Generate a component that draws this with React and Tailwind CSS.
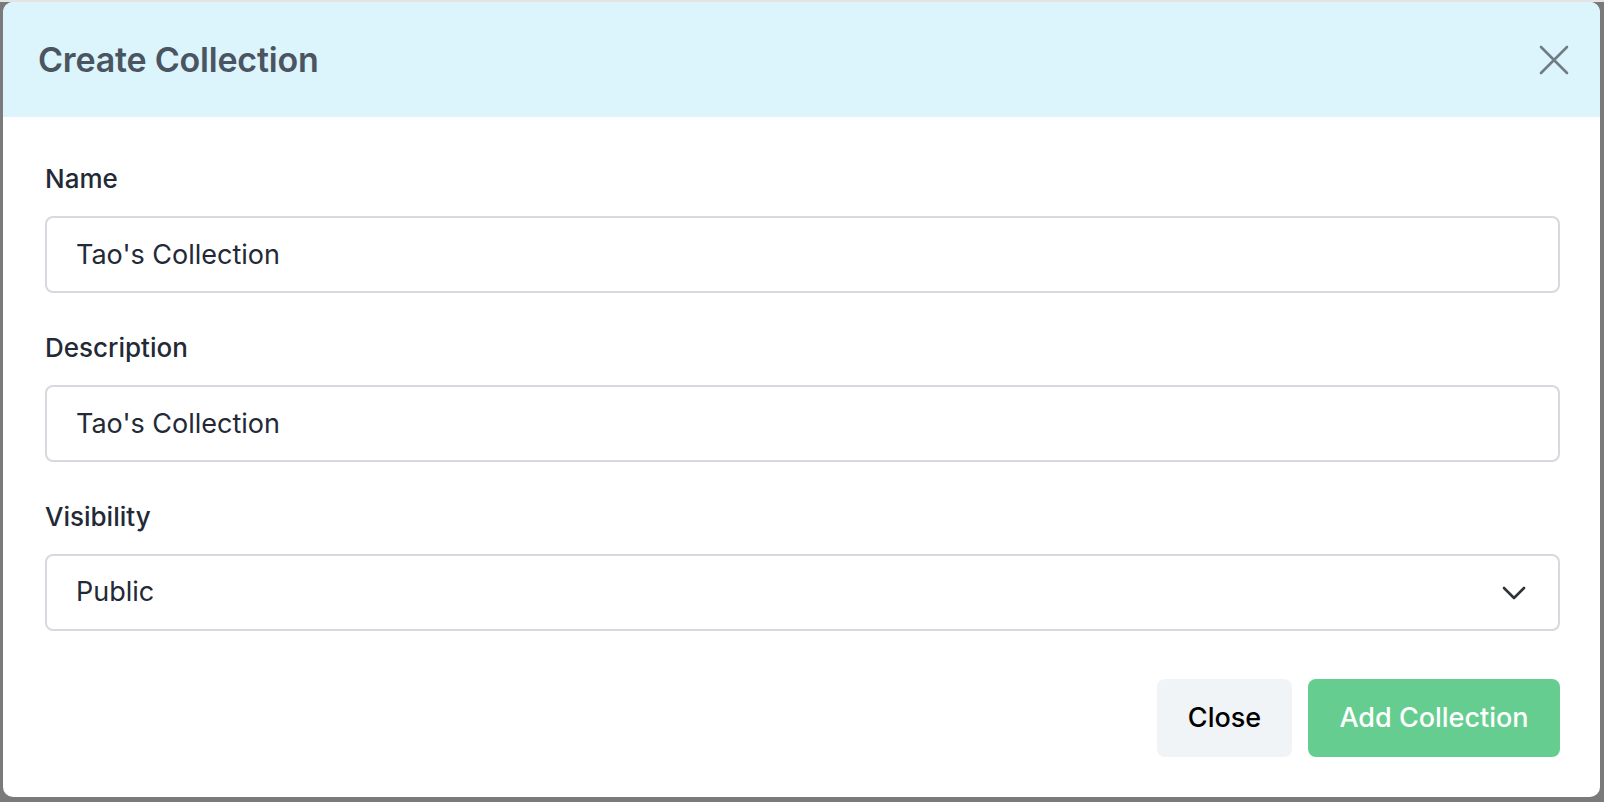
import React, { useState } from "react";

const fields = [
  { id: "name", label: "Name", value: "Tao's Collection" },
  { id: "description", label: "Description", value: "Tao's Collection" },
];

const CreateCollectionModal = () => {
  const [values, setValues] = useState({
    name: "Tao's Collection",
    description: "Tao's Collection",
    visibility: "Public",
  });

  const update = (key) => (e) =>
    setValues((prev) => ({ ...prev, [key]: e.target.value }));

  return (
    <div className="flex flex-col h-full bg-white rounded-[10px] overflow-hidden">
      {/* Header */}
      <div className="flex items-center justify-between h-[115px] pl-[35px] pr-[31px] bg-[#dcf4fc]">
        <h2 className="text-[34px] leading-none font-semibold text-[#4a5561] tracking-[-0.2px]">
          Create Collection
        </h2>
        <button className="w-[30px] h-[30px] flex items-center justify-center text-[#6f7c81]">
          <svg width="30" height="30" viewBox="0 0 30 30" fill="none">
            <path
              d="M2 2L28 28M28 2L2 28"
              stroke="currentColor"
              strokeWidth="2.6"
              strokeLinecap="round"
            />
          </svg>
        </button>
      </div>

      {/* Body */}
      <div className="flex-1 flex flex-col pt-[46px] pl-[42px] pr-[40px]">
        {fields.map((field) => (
          <div key={field.id} className="mb-[39px]">
            <label
              htmlFor={field.id}
              className="block text-[26px] leading-[32px] font-medium text-[#232936]"
            >
              {field.label}
            </label>
            <input
              id={field.id}
              value={values[field.id]}
              onChange={update(field.id)}
              className="mt-[21px] w-full h-[77px] px-[29px] rounded-[8px] border-2 border-[#d6d9dd] text-[27px] text-[#232936] outline-none"
            />
          </div>
        ))}

        <div>
          <label
            htmlFor="visibility"
            className="block text-[26px] leading-[32px] font-medium text-[#232936]"
          >
            Visibility
          </label>
          <div className="relative mt-[21px]">
            <select
              id="visibility"
              value={values.visibility}
              onChange={update("visibility")}
              className="appearance-none w-full h-[77px] px-[29px] rounded-[8px] border-2 border-[#d6d9dd] bg-white text-[27px] text-[#232936] outline-none"
            >
              <option>Public</option>
              <option>Private</option>
            </select>
            <svg
              className="absolute right-[34px] top-1/2 -translate-y-1/2 pointer-events-none text-[#2d333a]"
              width="24"
              height="14"
              viewBox="0 0 24 14"
              fill="none"
            >
              <path
                d="M2 2L12 12L22 2"
                stroke="currentColor"
                strokeWidth="2.6"
                strokeLinecap="round"
                strokeLinejoin="round"
              />
            </svg>
          </div>
        </div>

        {/* Footer */}
        <div className="flex justify-end gap-[16px] mt-[48px]">
          <button className="h-[78px] w-[135px] rounded-[8px] bg-[#f1f4f7] text-[27px] font-medium text-black">
            Close
          </button>
          <button className="h-[78px] w-[252px] rounded-[8px] bg-[#66cd90] text-[27px] font-medium text-white">
            Add Collection
          </button>
        </div>
      </div>
    </div>
  );
};

const App = () => {
  return (
    <div
      className="w-[1604px] h-[802px] bg-[#7a7a7a] pl-[3px] pr-[4px] pb-[5px] border-t-2 border-[#e4e4e4]"
      style={{ fontFamily: "Inter, 'Noto Sans', sans-serif" }}
    >
      <CreateCollectionModal />
    </div>
  );
};

export default App;
